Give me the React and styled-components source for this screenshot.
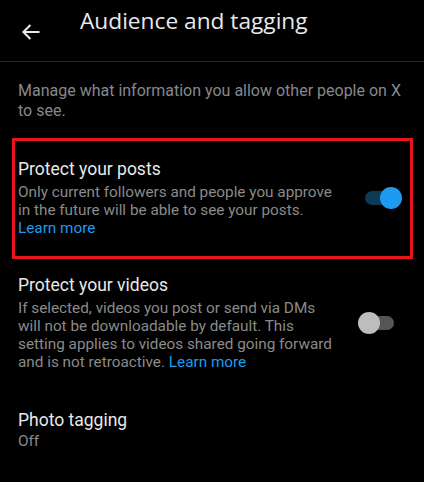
import React from "react";
import styled, { createGlobalStyle } from "styled-components";

const Global = createGlobalStyle`
  html, body { margin: 0; padding: 0; background: #000; }
  body { font-family: Roboto, "Noto Sans", sans-serif; -webkit-font-smoothing: antialiased; }
`;

const Page = styled.div`
  width: 424px;
  min-height: 482px;
  background: #000;
  color: #e7e9ea;
`;

const Header = styled.header`
  height: 61px;
  display: flex;
  align-items: flex-start;
  border-bottom: 1px solid #262628;
`;

const BackButton = styled.div`
  width: 58px;
  padding-left: 22px;
  margin-top: 24px;
  height: 16px;
  display: flex;
  svg { display: block; }
`;

const Title = styled.h1`
  margin: 0;
  font-family: "Open Sans", "Noto Sans", sans-serif;
  font-weight: 500;
  font-size: 22.7px;
  line-height: 41px;
  color: #e7e9ea;
`;

const Intro = styled.p`
  margin: 0;
  padding: 19px 18px 0;
  font-family: Roboto, "Noto Sans", sans-serif;
  font-size: 16px;
  line-height: 20px;
  color: #85888c;
`;

const Highlight = styled.div`
  margin: 17px 11px 0 12px;
  border: 3px solid #e8141c;
`;

const Row = styled.div`
  display: flex;
  align-items: center;
  padding: ${p => p.$pad || "0"};
`;

const RowText = styled.div`
  flex: 1;
  min-width: 0;
`;

const RowTitle = styled.div`
  font-size: 17.5px;
  line-height: 22px;
  color: #e7e9ea;
`;

const RowDesc = styled.div`
  margin-top: ${p => p.$gap || "3px"};
  font-size: 15.3px;
  line-height: 18px;
  color: #8a8a8a;
  max-width: 320px;
`;

const Link = styled.span`
  color: #1d9bf0;
`;

const Switch = styled.div`
  position: relative;
  flex: none;
  width: 34px;
  height: 14px;
  border-radius: 7px;
  margin-right: ${p => p.$mr};
  background: ${p => (p.$on ? "#0d3a56" : "#555555")};
`;

const Thumb = styled.div`
  position: absolute;
  top: -4px;
  ${p => (p.$on ? "right: -3px;" : "left: -2px;")}
  width: 22px;
  height: 22px;
  border-radius: 50%;
  background: ${p => (p.$on ? "#1d9bf0" : "#bdbdbd")};
`;

const Toggle = ({ on, mr }) => (
  <Switch $on={on} $mr={mr}>
    <Thumb $on={on} />
  </Switch>
);

export default function App() {
  return (
    <Page>
      <Global />
      <Header>
        <BackButton>
          <svg width="18" height="16" viewBox="0 0 18 16" fill="none">
            <path d="M17.5 8H1.6M8.4 1L1.4 8l7 7" stroke="#e7e9ea" strokeWidth="2" strokeLinecap="butt" strokeLinejoin="miter" />
          </svg>
        </BackButton>
        <Title>Audience and tagging</Title>
      </Header>
      <Intro>Manage what information you allow other people on X to see.</Intro>
      <Highlight>
        <Row $pad="17px 0 19px 3px">
          <RowText>
            <RowTitle>Protect your posts</RowTitle>
            <RowDesc>
              Only current followers and people you approve in the future will be able to see your posts.
              <br />
              <Link>Learn more</Link>
            </RowDesc>
          </RowText>
          <Toggle on mr="11px" />
        </Row>
      </Highlight>
      <Row $pad="15px 0 0 18px">
        <RowText>
          <RowTitle>Protect your videos</RowTitle>
          <RowDesc>
            If selected, videos you post or send via DMs will not be downloadable by default. This setting applies to videos shared going forward and is not retroactive. <Link>Learn more</Link>
          </RowDesc>
        </RowText>
        <Toggle mr="30px" />
      </Row>
      <Row $pad="38px 0 0 18px">
        <RowText>
          <RowTitle>Photo tagging</RowTitle>
          <RowDesc $gap="1px">Off</RowDesc>
        </RowText>
      </Row>
    </Page>
  );
}
